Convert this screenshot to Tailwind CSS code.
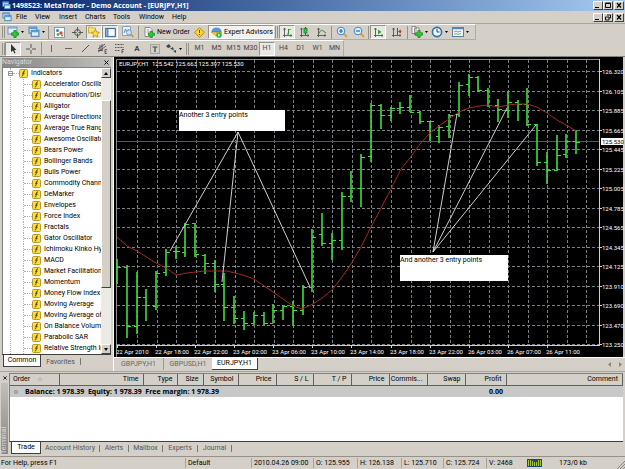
<!DOCTYPE html>
<html lang="en">
<head>
    <meta charset="UTF-8">
    <meta name="viewport" content="width=device-width, initial-scale=1.0">
    <title>1498523: MetaTrader - Demo Account - [EURJPY,H1]</title>
    <script src="https://cdn.jsdelivr.net/npm/@tailwindcss/browser@4"></script>
</head>
<body class="bg-[#d4d0c8] text-black text-[7px] leading-[11px] font-['Roboto','Liberation_Sans',sans-serif] whitespace-nowrap overflow-hidden">

    <!-- shared shapes -->
    <svg class="hidden">
        <symbol id="windows" viewBox="0 0 11 11">
            <rect x="1" y="1" width="7" height="5.500" fill="#e8f2fb" stroke="#4b7fb5"/>
            <path d="M1 2h7" stroke="#5d9bd8" stroke-width="1.500"/>
            <rect x="3" y="4" width="7" height="5.500" fill="#dcebf9" stroke="#4b7fb5"/>
            <path d="M3 5h7" stroke="#5d9bd8" stroke-width="1.500"/>
        </symbol>
        <symbol id="plus" viewBox="0 0 7 7"><path d="M2.500 .5h2v2h2v2h-2v2h-2v-2h-2v-2h2z" fill="#2fd02f" stroke="#12861a" stroke-width=".7"/></symbol>
        <symbol id="down" viewBox="0 0 3 2"><path d="M0 0h3L1.500 2z"/></symbol>
        <symbol id="axes" viewBox="0 0 11 11"><path d="M2.500 1v9M1 8.500h9M1.500 2.500l1-1.500 1 1.500M8.500 7.500l1.500 1-1.500 1" fill="none" stroke="#555" stroke-width=".9"/></symbol>
        <symbol id="func" viewBox="0 0 9 9">
            <rect x=".5" y=".5" width="8" height="8" rx="1" fill="#f7dd4a" stroke="#b99b22"/>
            <path d="M6 2q-1.300-.5-1.500 1L4 6q-.2 1.200-1.200 1M3.200 4.200h2.500" fill="none" stroke="#4c3c00" stroke-width=".9"/>
        </symbol>
    </svg>

    <header class="flex items-center h-[11px] bg-linear-to-r from-[#0a246a] to-[#a6caf0] text-white font-bold pl-[2px] pr-[1px]">
        <svg class="size-[9px] mr-[1px]"><use href="#windows"/></svg>
        <h1 class="flex-1 font-['Open_Sans','Noto_Sans',sans-serif]">1498523: MetaTrader - Demo Account - [EURJPY,H1]</h1>
        <button aria-label="Minimize" class="w-[10px] h-[9px] bg-[#d4d0c8] border border-t-white border-l-white border-b-[#404040] border-r-[#404040]"><svg viewBox="0 0 8 7"><path d="M1 5.500h4" stroke="#000"/></svg></button>
        <button aria-label="Maximize" class="w-[10px] h-[9px] bg-[#d4d0c8] border border-t-white border-l-white border-b-[#404040] border-r-[#404040]"><svg viewBox="0 0 8 7"><path d="M1.500 1.500h5v4h-5zM1.500 1h5" fill="none" stroke="#000"/></svg></button>
        <button aria-label="Close" class="w-[10px] h-[9px] ml-[1px] bg-[#d4d0c8] border border-t-white border-l-white border-b-[#404040] border-r-[#404040]"><svg viewBox="0 0 8 7"><path d="M2 1l4 4.500M6 1L2 5.500" stroke="#000" stroke-width="1.200"/></svg></button>
    </header>

    <nav class="flex items-center h-[13px] pl-[2px] pr-[1px] border-b border-[#a8a49c]">
        <svg class="size-[10px] mr-[4px]"><use href="#windows"/></svg>
        <div class="flex-1 flex">
            <button class="w-[19px] text-left">File</button>
            <button class="w-[24px] text-left">View</button>
            <button class="w-[26px] text-left">Insert</button>
            <button class="w-[28px] text-left">Charts</button>
            <button class="w-[26px] text-left">Tools</button>
            <button class="w-[33px] text-left">Window</button>
            <button class="w-[20px] text-left">Help</button>
        </div>
        <button aria-label="Minimize chart" class="w-[10px] h-[9px] bg-[#d4d0c8] border border-t-white border-l-white border-b-[#404040] border-r-[#404040]"><svg viewBox="0 0 8 7"><path d="M1 5.500h4" stroke="#000"/></svg></button>
        <button aria-label="Restore chart" class="w-[10px] h-[9px] bg-[#d4d0c8] border border-t-white border-l-white border-b-[#404040] border-r-[#404040]"><svg viewBox="0 0 8 7"><path d="M3 1h3.500v3H5M1.500 3h3.500v3H1.500z" fill="none" stroke="#000" stroke-width=".9"/></svg></button>
        <button aria-label="Close chart" class="w-[10px] h-[9px] ml-[1px] bg-[#d4d0c8] border border-t-white border-l-white border-b-[#404040] border-r-[#404040]"><svg viewBox="0 0 8 7"><path d="M2 1l4 4.500M6 1L2 5.500" stroke="#000" stroke-width="1.200"/></svg></button>
    </nav>

    <!-- standard toolbar -->
    <div class="flex items-center h-[16px] w-[476px] border-t border-t-white border-r border-b border-[#b0aca4] pl-[2px]">
        <i class="w-[3px] h-[12px] border-l border-r border-[#96928a]"></i>
        <button aria-label="New chart" class="w-[21px] flex items-center justify-center gap-[2px]">
            <svg class="size-[12px]" viewBox="0 0 12 12"><rect x="1" y="1" width="9" height="7" fill="#e4f0fb" stroke="#6d93bb"/><path d="M1 2h9" stroke="#5d9bd8"/><use href="#plus" x="4" y="4" width="8" height="8"/></svg>
            <svg class="w-[3px] h-[2px]"><use href="#down"/></svg>
        </button>
        <button aria-label="Profiles" class="w-[21px] flex items-center justify-center gap-[2px]">
            <svg class="size-[12px]"><use href="#windows"/></svg>
            <svg class="w-[3px] h-[2px]"><use href="#down"/></svg>
        </button>
        <i class="w-px h-[13px] mx-[1px] bg-[#96928a]"></i>
        <button aria-label="Market watch" class="w-[18px] flex justify-center"><svg class="size-[11px]" viewBox="0 0 11 11"><rect x=".5" y=".5" width="10" height="10" fill="#fff" stroke="#8d9aa8"/><circle cx="3.500" cy="3.500" r="1.500" fill="#2f7fd0"/><path d="M5.500 4.500h3v3h-3z" fill="#e0442c"/><circle cx="4" cy="7.500" r="1.400" fill="#3db84a"/><circle cx="8" cy="8.500" r="1" fill="#2fa93e"/></svg></button>
        <button aria-label="Data window" class="w-[18px] flex justify-center"><svg class="size-[11px]" viewBox="0 0 11 11"><circle cx="5.500" cy="5.500" r="3" fill="none" stroke="#555"/><path d="M5.500 0v4.500M5.500 6.500V11M0 5.500h4.500M6.500 5.500H11" stroke="#555"/></svg></button>
        <button aria-label="Navigator" class="w-[16px] h-[14px] flex justify-center items-center bg-[#eae8e4] border border-[#96928a] border-b-white border-r-white"><svg class="size-[12px]" viewBox="0 0 12 12"><path d="M.5 2.500V1h3l1 1h3v5h-7z" fill="#f9e27a" stroke="#b99322" stroke-width=".7"/><path d="M7.500 3.500l1.200 2.500 2.800.3-2 2 .5 2.900-2.500-1.400L5 11.200l.5-2.900-2-2 2.800-.3z" fill="#ffdf3e" stroke="#a97f14" stroke-width=".7"/></svg></button>
        <button aria-label="Terminal" class="w-[16px] h-[14px] flex justify-center items-center bg-[#eae8e4] border border-[#96928a] border-b-white border-r-white"><svg class="size-[11px]" viewBox="0 0 11 11"><rect x=".7" y="1.500" width="9.600" height="8" fill="#fff" stroke="#3e6da8" stroke-width="1.200"/><path d="M2.500 2v7.500" stroke="#5c8fd0" stroke-width="2"/></svg></button>
        <button aria-label="Strategy tester" class="w-[19px] flex justify-center"><svg class="size-[12px]" viewBox="0 0 12 12"><path d="M.5.5h8v9h-8z" fill="#e8f1fa" stroke="#8ba2ba"/><path d="M2 7l1.500-4L5 6l1.500-3" fill="none" stroke="#44709f" stroke-width=".8"/><circle cx="7" cy="6.500" r="2.500" fill="#cfe3f6" stroke="#6b8cae" stroke-width=".8"/><path d="M9 8.500l2.500 2.500" stroke="#c8961d" stroke-width="1.500"/></svg></button>
        <i class="w-px h-[13px] mx-[1px] bg-[#96928a]"></i>
        <button class="w-[51px] pl-[4px] flex items-center gap-[2px]">
            <svg class="size-[11px] shrink-0" viewBox="0 0 11 11"><path d="M1 .5h5l2 2v7H1z" fill="#fff" stroke="#777" stroke-width=".8"/><path d="M2.500 3h3M2.500 5h3" stroke="#777" stroke-width=".7"/><use href="#plus" x="3.500" y="3.500" width="7.500" height="7.500"/></svg>New Order
        </button>
        <button aria-label="MetaEditor" class="w-[16px] flex justify-center"><svg class="size-[11px]" viewBox="0 0 11 11"><path d="M5.500.7l4.800 4.800-4.800 4.800L.7 5.500z" fill="#fbd43a" stroke="#b68a12"/><path d="M5.500 3v3M5.500 7v1" stroke="#5c4300"/></svg></button>
        <button class="w-[66px] h-[14px] ml-[1px] pl-[2px] flex items-center gap-[2px] bg-[#f2f1ee] border border-[#96928a] border-b-white border-r-white">
            <svg class="size-[11px] shrink-0" viewBox="0 0 11 11"><path d="M1 5q0-4 4.500-4T10 5z" fill="#4c9fe0" stroke="#2c6ca8" stroke-width=".6"/><path d="M0 5h11L5 9z" fill="#e9c94b" stroke="#a98a20" stroke-width=".5"/><circle cx="8" cy="8" r="2.800" fill="#2cb83a"/><path d="M7.200 6.500l2 1.500-2 1.500z" fill="#fff"/></svg>Expert Advisors
        </button>
        <i class="w-[3px] h-[12px] mx-[1px] border-l border-r border-[#96928a]"></i>
        <button aria-label="Bar chart" class="w-[16px] h-[14px] flex justify-center items-center bg-[#eae8e4] border border-[#96928a] border-b-white border-r-white"><svg class="size-[11px]" viewBox="0 0 11 11"><use href="#axes"/><path d="M6.500 2v5.500M6.500 2.500h2M5 7h1.500" stroke="#1c9a2c"/></svg></button>
        <button aria-label="Candlesticks" class="w-[18px] flex justify-center"><svg class="size-[11px]" viewBox="0 0 11 11"><use href="#axes"/><path d="M6.500 0v8" stroke="#157a20"/><rect x="5" y="1.500" width="3" height="4.500" fill="#35cc45" stroke="#157a20" stroke-width=".8"/></svg></button>
        <button aria-label="Line chart" class="w-[17px] flex justify-center"><svg class="size-[11px]" viewBox="0 0 11 11"><use href="#axes"/><path d="M2.500 7q2.500-5 4-3.500L10 6" fill="none" stroke="#1c9a2c"/></svg></button>
        <i class="w-px h-[13px] mx-[1px] bg-[#96928a]"></i>
        <button aria-label="Zoom in" class="w-[17px] flex justify-center"><svg class="size-[12px]" viewBox="0 0 12 12"><path d="M7.500 7.500l3.500 3.500" stroke="#d8a520" stroke-width="2"/><circle cx="5" cy="5" r="3.800" fill="#e2f1fd" stroke="#3b86cc"/><path d="M3 5h4M5 3v4" stroke="#2266b0" stroke-width="1.200"/></svg></button>
        <button aria-label="Zoom out" class="w-[17px] flex justify-center"><svg class="size-[12px]" viewBox="0 0 12 12"><path d="M7.500 7.500l3.500 3.500" stroke="#d8a520" stroke-width="2"/><circle cx="5" cy="5" r="3.800" fill="#e2f1fd" stroke="#3b86cc"/><path d="M3 5h4" stroke="#2266b0" stroke-width="1.200"/></svg></button>
        <i class="w-px h-[13px] mx-[1px] bg-[#96928a]"></i>
        <button aria-label="Auto scroll" class="w-[16px] h-[14px] flex justify-center items-center bg-[#eae8e4] border border-[#96928a] border-b-white border-r-white"><svg class="size-[11px]" viewBox="0 0 11 11"><use href="#axes"/><path d="M5 2.500L8.500 5 5 7.500z" fill="#22a833"/></svg></button>
        <button aria-label="Chart shift" class="w-[20px] flex justify-center"><svg class="size-[11px]" viewBox="0 0 11 11"><use href="#axes"/><path d="M6.500 1v7" stroke="#555"/><path d="M10.500 4.500H8M9.500 3L7.500 4.500l2 1.500z" stroke="#c83a20" fill="#c83a20" stroke-width=".8"/></svg></button>
        <i class="w-px h-[13px] mx-[1px] bg-[#96928a]"></i>
        <button aria-label="Indicators list" class="w-[20px] flex items-center justify-center gap-[2px]">
            <svg class="size-[12px]" viewBox="0 0 12 12"><path d="M1 .5h4v7H1zM3.500 2h4.500v7H3.500z" fill="#fff" stroke="#777" stroke-width=".8"/><use href="#plus" x="4" y="4" width="8" height="8"/></svg>
            <svg class="w-[3px] h-[2px]"><use href="#down"/></svg>
        </button>
        <button aria-label="Periods" class="w-[21px] flex items-center justify-center gap-[2px]">
            <svg class="size-[12px]" viewBox="0 0 12 12"><circle cx="6" cy="6" r="4.600" fill="#eef6fd" stroke="#2b6fb8" stroke-width="1.600"/><path d="M6 3v3h2.500" fill="none" stroke="#333" stroke-width=".9"/></svg>
            <svg class="w-[3px] h-[2px]"><use href="#down"/></svg>
        </button>
        <button aria-label="Templates" class="w-[21px] flex items-center justify-center gap-[2px]">
            <svg class="size-[12px]" viewBox="0 0 12 12"><rect x=".5" y="1.500" width="11" height="9" fill="#f2f7fc" stroke="#5d7ea0"/><path d="M1 2.500h10" stroke="#4f88c8" stroke-width="1.500"/><path d="M2 6l2-1 2 1 3-1" fill="none" stroke="#c0452e" stroke-width=".7"/><path d="M2 8.500l2-1 2 1 3-1" fill="none" stroke="#2f9a3c" stroke-width=".7"/></svg>
            <svg class="w-[3px] h-[2px]"><use href="#down"/></svg>
        </button>
    </div>

    <!-- line studies and timeframes -->
    <div class="flex items-center h-[16px] w-[344px] border-t border-t-white border-r border-[#b0aca4] pl-[2px] text-[#444]">
        <i class="w-[3px] h-[12px] border-l border-r border-[#96928a]"></i>
        <button aria-label="Cursor" class="w-[16px] h-[14px] flex justify-center items-center bg-[#eae8e4] border border-[#96928a] border-b-white border-r-white"><svg class="size-[10px]" viewBox="0 0 10 10"><path d="M3 0v8l2-1.500L6.300 9.500l1.200-.6L6.200 6H8.500z" fill="#333"/></svg></button>
        <button aria-label="Crosshair" class="w-[19px] flex justify-center"><svg class="size-[10px]" viewBox="0 0 10 10"><path d="M5 0v4M5 6v4M0 5h4M6 5h4" stroke="#555"/></svg></button>
        <i class="w-px h-[13px] mx-[1px] bg-[#96928a]"></i>
        <button aria-label="Vertical line" class="w-[16px] flex justify-center"><svg class="size-[9px]" viewBox="0 0 9 9"><path d="M4.500 1v7" stroke="#666"/></svg></button>
        <button aria-label="Horizontal line" class="w-[18px] flex justify-center"><svg class="size-[9px]" viewBox="0 0 9 9"><path d="M1 4.500h7" stroke="#666"/></svg></button>
        <button aria-label="Trendline" class="w-[17px] flex justify-center"><svg class="size-[9px]" viewBox="0 0 9 9"><path d="M1 8l7-7" stroke="#555"/></svg></button>
        <button aria-label="Equidistant channel" class="w-[17px] flex justify-center"><svg class="size-[11px]" viewBox="0 0 11 11"><path d="M1 6l7-5M1 9l8-6M3 2v6M5 1v6M1 7.500h5" stroke="#444" stroke-width=".8"/><path d="M10 6.500H8v4h2M8 8.500h1.500" fill="none" stroke="#444" stroke-width=".8"/></svg></button>
        <button aria-label="Fibonacci retracement" class="w-[17px] flex justify-center"><svg class="size-[11px]" viewBox="0 0 11 11"><path d="M1 1.500h9M1 4.500h9M1 7.500h5" stroke="#555" stroke-dasharray="1 .5"/><path d="M10 6.500H8v4M8 8.500h1.500" fill="none" stroke="#444" stroke-width=".8"/></svg></button>
        <button aria-label="Text" class="w-[18px] text-center font-bold text-[8px]">A</button>
        <button aria-label="Text label" class="w-[17px] flex justify-center"><svg class="size-[10px]" viewBox="0 0 10 10"><rect x=".5" y=".5" width="9" height="9" fill="none" stroke="#777" stroke-dasharray="1 1"/><path d="M2.500 3h5M5 3v5" stroke="#444" stroke-width="1.200"/></svg></button>
        <button aria-label="Arrows" class="w-[21px] flex items-center justify-center gap-[2px]">
            <svg class="size-[11px]" viewBox="0 0 11 11"><path d="M0 3l3-2 2 3-3 1zM4 6l3-2 1 3zM7 8l3-1v3z" fill="#444"/></svg>
            <svg class="w-[3px] h-[2px]"><use href="#down"/></svg>
        </button>
        <i class="w-[3px] h-[12px] mx-[2px] border-l border-r border-[#96928a]"></i>
        <button class="w-[17px] text-center">M1</button>
        <button class="w-[17px] text-center">M5</button>
        <button class="w-[17px] text-center">M15</button>
        <button class="w-[17px] text-center">M30</button>
        <button class="w-[16px] h-[14px] flex justify-center items-center bg-[#eae8e4] border border-[#96928a] border-b-white border-r-white">H1</button>
        <button class="w-[17px] text-center">H4</button>
        <button class="w-[17px] text-center">D1</button>
        <button class="w-[17px] text-center">W1</button>
        <button class="w-[17px] text-center">MN</button>
    </div>

    <main class="flex border-t border-[#808080]">
        <!-- navigator -->
        <aside class="w-[114px] shrink-0 pl-[2px] pr-[2px] pt-px border-r border-white">
            <div class="flex items-center justify-between h-[9px] pr-[2px] bg-linear-to-r from-[#868686] to-[#c0bfbb] text-[#dedcd8]">
                <h2>Navigator</h2>
                <button aria-label="Close navigator" class="text-black"><svg class="size-[5px]" viewBox="0 0 5 5"><path d="M.5.5l4 4M4.500.5l-4 4" stroke="#000"/></svg></button>
            </div>
            <div class="flex h-[287px] bg-white border-l border-t border-[#808080]">
                <ul id="tree" class="flex-1 min-w-0 ml-[7px] border-l border-dotted border-[#b0b0b0]">
                    <li class="flex items-center h-[11px]">
                        <svg class="size-[5px] -ml-[3px] shrink-0 bg-white" viewBox="0 0 5 5"><path d="M.5.5h4v4h-4zM1 2.500h3" fill="none" stroke="#777" stroke-width=".8"/></svg>
                        <i class="w-[6px] border-t border-dotted border-[#b0b0b0]"></i>
                        <svg class="size-[9px] mr-[3px] shrink-0"><use href="#func"/></svg>Indicators
                    </li>
                </ul>
                <div class="w-[10px] shrink-0 bg-[#eceae6] flex flex-col">
                    <button aria-label="Scroll up" class="h-[10px] flex justify-center items-center bg-[#d4d0c8] border border-white border-b-[#404040] border-r-[#404040]"><svg class="w-[4px] h-[3px]" viewBox="0 0 4 3"><path d="M0 3h4L2 0z"/></svg></button>
                    <div class="mt-[22px] h-[188px] bg-[#d4d0c8] border border-white border-b-[#404040] border-r-[#404040]"></div>
                    <button aria-label="Scroll down" class="mt-auto h-[10px] flex justify-center items-center bg-[#d4d0c8] border border-white border-b-[#404040] border-r-[#404040]"><svg class="w-[4px] h-[3px]" viewBox="0 0 4 3"><path d="M0 0h4L2 3z"/></svg></button>
                </div>
            </div>
            <div class="flex h-[14px] border-t border-[#404040] text-[#555]">
                <button class="w-[38px] h-[12px] ml-px bg-white text-black border-l border-b border-r border-[#404040]">Common</button>
                <button class="w-[39px] h-[12px] my-px">Favorites</button>
                <i class="w-px h-[7px] mt-[3px] bg-[#777]"></i>
            </div>
        </aside>

        <section class="flex-1 min-w-0">
            <svg id="chart" class="block w-full bg-black" viewBox="114 57 511 300" font-size="6" fill="#fff">
                <path d="M624 57v300" stroke="#d4d0c8" stroke-width="2"/>
                <path d="M116.500 357V59.500H600" fill="none" stroke="#8a8e8e"/>
                <path id="grid" stroke="#7b8085" stroke-dasharray="3 2"/>
                <path d="M117 141.500h482" stroke="#55585e"/>
                <path d="M117 345.500h483M599.500 59v287" stroke="#d0d0d0"/>
                <path id="stems" stroke="#3fdc3f" stroke-width="1.600"/>
                <path id="ticks" stroke="#3fdc3f"/>
                <path id="average" fill="none" stroke="#a02a22"/>
                <path d="M238 132L170 251M238 132L222 282M238 132L310 287M433 252L457 114M433 252L507 108M433 252L536 125" stroke="#e4e4e4" stroke-width=".9"/>
                <rect x="179" y="110" width="106" height="21"/>
                <text x="179" y="117" font-size="7" fill="#000">Another 3 entry points</text>
                <rect x="400" y="255" width="108" height="26"/>
                <text x="400" y="262" font-size="7" fill="#000">And another 3 entry points</text>
                <text x="119" y="66">EURJPY,H1&#160; 125.542 125.663 125.397 125.530</text>
                <g id="labels"></g>
                <rect x="601" y="138" width="22" height="7"/>
                <text x="602" y="144" fill="#000">125.530</text>
            </svg>
            <div class="flex items-start h-[14px] border-t border-white text-[#666]">
                <button class="w-[49px] h-[12px]">GBPJPY,H1</button>
                <button class="w-[49px] h-[12px] border-l border-[#999]">GBPUSD,H1</button>
                <button class="w-[46px] h-[12px] bg-white text-black border-r border-b border-[#404040]">EURJPY,H1</button>
                <svg class="w-[14px] h-[5px] mt-[4px] ml-auto mr-[3px]" viewBox="0 0 14 5"><path d="M3 0v5L0 2.500zM11 0v5l3-2.500z" fill="#8a867e"/></svg>
            </div>
        </section>
    </main>

    <!-- terminal -->
    <section class="flex pr-[2px] pt-px border-t border-[#a8a49c]">
        <div class="w-[9px] shrink-0 flex flex-col items-center">
            <button aria-label="Close terminal" class="h-[10px] flex items-center"><svg class="size-[4px]" viewBox="0 0 5 5"><path d="M.5.5l4 4M4.500.5l-4 4" stroke="#000"/></svg></button>
            <h2 class="flex-1 w-[7px] leading-[7px] text-[#dedcd8] bg-linear-to-b from-[#868686] to-[#c0bfbb] [writing-mode:vertical-rl] rotate-180">Terminal</h2>
        </div>
        <div class="flex-1 min-w-0">
            <div class="h-[69px] bg-white border-t border-l border-[#808080] border-b border-b-[#404040]">
                <table class="w-full table-fixed">
                    <thead>
                        <tr class="h-[11px] bg-[#d4d0c8] text-right [&>th]:font-normal [&>th]:p-0 [&>th]:pr-[4px] [&>th]:border-r [&>th]:border-b [&>th]:border-[#606060] [&>th]:leading-[10px]">
                            <th class="w-[49px] text-left pl-[3px]!">Order <svg class="inline size-[4px] ml-[6px]" viewBox="0 0 4 4"><path d="M0 4L2 0l2 4z" fill="none" stroke="#aaa69e" stroke-width=".7"/></svg></th>
                            <th class="w-[84px]">Time</th>
                            <th class="w-[34px]">Type</th>
                            <th class="w-[26px]">Size</th>
                            <th class="w-[35px]">Symbol</th>
                            <th class="w-[38px]">Price</th>
                            <th class="w-[37px]">S / L</th>
                            <th class="w-[38px]">T / P</th>
                            <th class="w-[38px]">Price</th>
                            <th class="w-[38px]">Commis...</th>
                            <th class="w-[38px]">Swap</th>
                            <th class="w-[41px]">Profit</th>
                            <th>Comment</th>
                        </tr>
                    </thead>
                    <tbody>
                        <tr class="h-[12px] bg-[#c8c8c8] font-bold font-['Open_Sans','Noto_Sans',sans-serif]">
                            <td colspan="11" class="p-0"><span class="inline-block size-[4px] ml-[4px] mr-[7px] rounded-full border border-[#888]"></span>Balance: 1 978.39&nbsp; Equity: 1 978.39&nbsp; Free margin: 1 978.39</td>
                            <td class="p-0 pr-[3px] text-right">0.00</td>
                            <td></td>
                        </tr>
                    </tbody>
                </table>
            </div>
            <div class="flex items-center h-[12px] text-[#555]">
                <button class="w-[30px] h-[12px] ml-[2px] bg-white text-black border-l border-r border-b border-[#404040]">Trade</button>
                <button class="w-[59px] h-[7px] leading-[7px] border-r border-[#777]">Account History</button>
                <button class="w-[29px] h-[7px] leading-[7px] border-r border-[#777]">Alerts</button>
                <button class="w-[34px] h-[7px] leading-[7px] border-r border-[#777]">Mailbox</button>
                <button class="w-[35px] h-[7px] leading-[7px] border-r border-[#777]">Experts</button>
                <button class="w-[34px] h-[7px] leading-[7px] border-r border-[#777]">Journal</button>
            </div>
        </div>
    </section>

    <footer class="flex items-center h-[13px] mt-[2px] border-t border-[#96928a] [&>span]:h-[10px] [&>span]:leading-[10px] [&>span]:pl-[2px] [&>span]:border-[#a8a49c]">
        <span class="w-[185px] pl-px!">For Help, press F1</span>
        <span class="w-[66px] border-l">Default</span>
        <span class="w-[62px] border-l">2010.04.26 09:00</span>
        <span class="w-[44px] border-l">O: 125.955</span>
        <span class="w-[44px] border-l">H: 126.138</span>
        <span class="w-[42px] border-l">L: 125.710</span>
        <span class="w-[43px] border-l">C: 125.724</span>
        <span class="w-[41px] border-l">V: 2468</span>
        <svg class="w-[15px] h-[8px]" viewBox="0 0 15 8"><path d="M0 0h15v8H0z" fill="#1c4a6b"/><path d="M1.500 1v6M3.500 1v6M5.500 2v5M7.500 3v4M9.500 3v4M11.500 1v6M13.500 1v6" stroke="#a6c63c"/></svg>
        <span class="w-[60px] text-center">173/0 kb</span>
        <svg class="size-[9px] ml-auto mt-[2px]" viewBox="0 0 9 9"><path d="M1 9l8-8M4 9l5-5M7 9l2-2" stroke="#88847c"/></svg>
    </footer>

    <script>
        const indicators = [
            "Accelerator Oscillato", "Accumulation/Distrib", "Alligator", "Average Directional", "Average True Rang",
            "Awesome Oscillator", "Bears Power", "Bollinger Bands", "Bulls Power", "Commodity Channel", "DeMarker",
            "Envelopes", "Force Index", "Fractals", "Gator Oscillator", "Ichimoku Kinko Hyo", "MACD",
            "Market Facilitation I", "Momentum", "Money Flow Index", "Moving Average", "Moving Average of",
            "On Balance Volume", "Parabolic SAR", "Relative Strength In"
        ];
        document.getElementById("tree").insertAdjacentHTML("beforeend", indicators.map(name => `
            <li class="flex items-center h-[11px] ml-[12px] border-l border-dotted border-[#b0b0b0]">
                <i class="w-[8px] shrink-0 border-t border-dotted border-[#b0b0b0]"></i>
                <svg class="size-[9px] mr-[3px] shrink-0"><use href="#func"/></svg>${name}
            </li>`).join(""));

        // high, low, open, close of each hour, as y positions
        const bars = [
            [259, 284, 267, 267], [265, 338, 267, 326], [272, 334, 326, 297], [289, 321, 297, 305], [271, 310, 306, 273],
            [249, 276, 272, 252], [246, 259, 251, 251], [223, 257, 252, 224], [223, 257, 223, 254], [254, 274, 255, 263],
            [260, 292, 263, 284], [273, 321, 284, 307], [296, 324, 307, 318], [311, 330, 318, 323], [312, 325, 323, 315],
            [312, 325, 315, 323], [304, 323, 323, 310], [305, 320, 310, 306], [301, 326, 306, 310], [285, 315, 310, 287],
            [229, 292, 287, 237], [213, 246, 234, 243], [233, 260, 243, 240], [192, 250, 240, 196], [171, 202, 196, 188],
            [154, 207, 188, 157], [103, 162, 156, 105], [104, 129, 105, 115], [107, 121, 115, 108], [102, 114, 108, 107],
            [95, 112, 107, 112], [111, 124, 112, 121], [121, 141, 121, 121], [125, 143, 136, 127], [114, 138, 126, 115],
            [82, 117, 114, 85], [74, 96, 84, 77], [76, 92, 77, 90], [88, 107, 90, 105], [99, 122, 105, 109],
            [92, 118, 110, 102], [100, 121, 102, 104], [88, 126, 104, 124], [124, 166, 124, 162], [152, 184, 162, 170],
            [135, 171, 170, 155], [134, 158, 154, 141], [130, 154, 141, 142]
        ];
        const step = 9.77;
        let stems = "", barTicks = "";
        bars.forEach(([high, low, open, close], i) => {
            const x = Math.round(117 + i * step);
            stems += `M${x} ${high}V${low}`;
            barTicks += `M${i ? x - 3 : x} ${open + 0.5}H${x}M${x} ${close + 0.5}h4`;
        });
        document.getElementById("stems").setAttribute("d", stems);
        document.getElementById("ticks").setAttribute("d", barTicks);

        const average = [
            [117, 237], [127, 246], [137, 251], [156, 263], [166, 268], [176, 275], [187, 273], [205, 271], [227, 271],
            [243, 275], [254, 279], [273, 292], [293, 306], [302, 309], [313, 304], [322, 298], [332, 290], [342, 277],
            [351, 264], [361, 247], [371, 227], [380, 210], [391, 189], [401, 169], [410, 158], [420, 144], [430, 133],
            [439, 126], [449, 119], [459, 112], [469, 108], [479, 106], [488, 105], [498, 107], [508, 105], [517, 104],
            [527, 104], [537, 107], [547, 113], [557, 120], [566, 125], [576, 131]
        ];
        document.getElementById("average").setAttribute("d", "M" + average.join("L"));

        const prices = ["126.320", "126.105", "125.885", "125.665", "125.445", "125.225", "125.005", "124.785",
            "124.565", "124.345", "124.125", "123.910", "123.690", "123.470", "123.250"];
        const times = ["22 Apr 2010", "22 Apr 18:00", "22 Apr 22:00", "23 Apr 02:00", "23 Apr 06:00", "23 Apr 10:00",
            "23 Apr 14:00", "23 Apr 18:00", "23 Apr 22:00", "26 Apr 03:00", "26 Apr 07:00", "26 Apr 11:00"];
        let grid = "", ticks = "", labels = "";
        prices.forEach((price, i) => {
            const y = Math.round(71 + i * 19.5) + 0.5;
            grid += `M117 ${y}H599`;
            ticks += `M600 ${y}h2`;
            labels += `<text x="602" y="${y + 2}">${price}</text>`;
        });
        for (let i = 0; i < 24; i++) {
            grid += `M${Math.round(137 + i * 19.54) + 0.5} 60V345`;
        }
        times.forEach((time, i) => {
            const x = Math.round(117 + i * 39.08);
            ticks += `M${x + 0.5} 345v3`;
            labels += `<text x="${x - 1}" y="354">${time}</text>`;
        });
        document.getElementById("grid").setAttribute("d", grid);
        document.getElementById("labels").innerHTML = `<path d="${ticks}" stroke="#d0d0d0"/>` + labels;
    </script>
</body>
</html>
